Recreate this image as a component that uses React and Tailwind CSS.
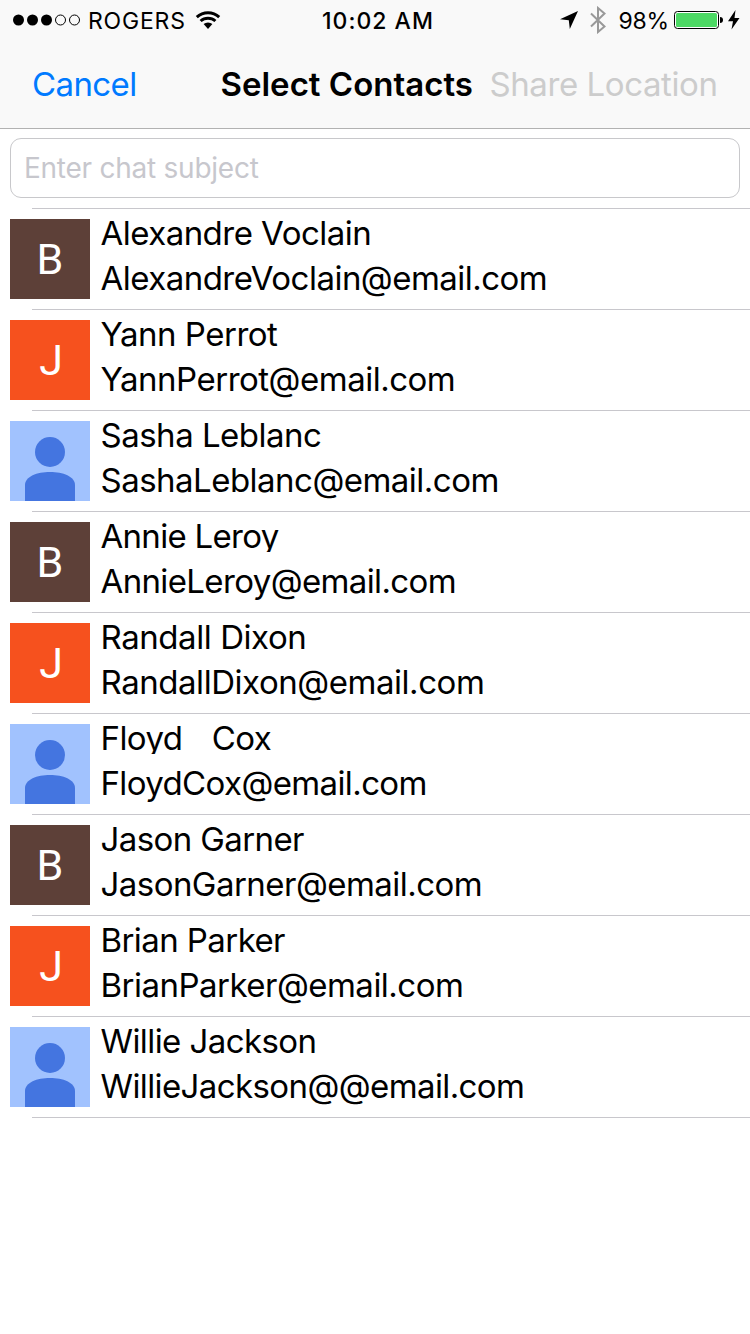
const contacts = [
  { name: "Alexandre Voclain", email: "AlexandreVoclain@email.com", avatar: "B", nameFit: "tracking-[-0.53px]", emailFit: "tracking-[-0.52px]" },
  { name: "Yann Perrot", email: "YannPerrot@email.com", avatar: "J", nameFit: "tracking-[-0.5px]", emailFit: "tracking-[-0.5px]" },
  { name: "Sasha Leblanc", email: "SashaLeblanc@email.com", avatar: "person", nameFit: "tracking-[-0.5px]", emailFit: "tracking-[-0.52px]" },
  { name: "Annie Leroy", email: "AnnieLeroy@email.com", avatar: "B", nameFit: "tracking-[-0.7px]", emailFit: "tracking-[-0.63px]" },
  { name: "Randall Dixon", email: "RandallDixon@email.com", avatar: "J", nameFit: "tracking-[-0.43px]", emailFit: "tracking-[-0.45px]" },
  { name: "Floyd   Cox", email: "FloydCox@email.com", avatar: "person", nameFit: "tracking-[-0.55px] [word-spacing:1px]", emailFit: "tracking-[-0.62px]" },
  { name: "Jason Garner", email: "JasonGarner@email.com", avatar: "B", nameFit: "tracking-[-0.6px]", emailFit: "tracking-[-0.54px]" },
  { name: "Brian Parker", email: "BrianParker@email.com", avatar: "J", nameFit: "tracking-[-0.58px]", emailFit: "tracking-[-0.52px]" },
  { name: "Willie Jackson", email: "WillieJackson@@email.com", avatar: "person", nameFit: "tracking-[-0.58px]", emailFit: "tracking-[-0.6px]" },
];

function Avatar({ kind }) {
  if (kind === "person") {
    return (
      <svg className="size-20 shrink-0" viewBox="0 0 80 80">
        <rect width="80" height="80" fill="#a1c2fe" />
        <circle cx="40" cy="31" r="15" fill="#4475e0" />
        <path d="M15 80V64C15 55.500 27 51 40 51S65 55.500 65 64V80Z" fill="#4475e0" />
      </svg>
    );
  }
  const color = kind === "B" ? "bg-[#5d4038]" : "bg-[#f6511e] pl-0.5";
  return (
    <div className={`flex size-20 shrink-0 items-center justify-center pt-px font-['Roboto',sans-serif] text-[43px] leading-none text-white ${color}`}>
      {kind}
    </div>
  );
}

function StatusBar() {
  return (
    <div className="grid h-10 grid-cols-[1fr_auto_1fr] items-center pl-3 pr-2.5 text-[23px] leading-[38px]">
      <div className="flex items-center">
        <svg className="h-3 w-[70px]" viewBox="0 0 70 12">
          <circle cx="6.500" cy="6" r="5.500" />
          <circle cx="20.500" cy="6" r="5.500" />
          <circle cx="34.500" cy="6" r="5.500" />
          <g fill="none" stroke="#000">
            <circle cx="48.500" cy="6" r="5" />
            <circle cx="62.500" cy="6" r="5" />
          </g>
        </svg>
        <span className="ml-1.5 pt-0.5 tracking-[0.8px]">ROGERS</span>
        <svg className="ml-[9.5px] h-[18px] w-[26px]" viewBox="0 0 26 18">
          <g fill="none" stroke="#000" strokeWidth="3">
            <path d="M1.800 6.200A16.500 16.500 0 0 1 24.200 6.200" />
            <path d="M5.600 10A11 11 0 0 1 20.400 10" />
          </g>
          <path d="M8.600 13.100A6.500 6.500 0 0 1 17.400 13.100L13 18Z" />
        </svg>
      </div>
      <span className="-mr-px pl-[3px] pt-0.5 font-medium tracking-[1px]">10:02 AM</span>
      <div className="flex items-center justify-end">
        <svg className="h-[18px] w-[18px]" viewBox="0 0 18 18">
          <path d="M18 0L9.800 18L8.800 9.200L0 8.200Z" />
        </svg>
        <svg className="ml-3 h-7 w-4" viewBox="0 0 16 28" fill="none" stroke="#999" strokeWidth="2">
          <path d="M1 7.500L14.500 20.500L8 26V2L14.500 7.500L1 20.500" />
        </svg>
        <span className="ml-[13px] pt-0.5 tracking-[-0.2px]">98%</span>
        <svg className="ml-[5px] h-[18px] w-[50px]" viewBox="0 0 50 18">
          <rect x="0.500" y="0.500" width="44" height="17" rx="3" fill="#fff" stroke="#000" />
          <rect x="2" y="2" width="41" height="14" rx="1.500" fill="#4cd964" />
          <path d="M46 6C48 6 49 7 49 9S48 12 46 12Z" />
        </svg>
        <svg className="ml-1 h-5 w-3" viewBox="0 0 12 20">
          <path d="M7.500 0L0 11.200H5L3.500 19.500L11.500 8H6.500Z" />
        </svg>
      </div>
    </div>
  );
}

export default function App() {
  return (
    <main className="h-[1334px] w-[750px] overflow-hidden bg-white font-['Inter',sans-serif] text-black">
      <header className="h-[129px] border-b border-[#b2b2b2] bg-[#f9f9f9]">
        <StatusBar />
        <nav className="flex h-[88px] items-center whitespace-nowrap pl-8 text-[33px] leading-[88px]">
          <button className="w-[188.5px] text-left text-[#007aff] tracking-[-0.6px]">Cancel</button>
          <h1 className="w-[269px] font-semibold">Select Contacts</h1>
          <button className="text-[#cccccc] tracking-[-0.42px]">Share Location</button>
        </nav>
      </header>
      <div className="p-2.5 pt-[9px]">
        <input
          className="block h-[60px] w-full rounded-[11px] border border-[#c8c8cb] bg-white px-[13px] text-[28px] tracking-[-0.25px] placeholder:text-[#c7c7cd]"
          placeholder="Enter chat subject"
        />
      </div>
      <div className="ml-8 h-px bg-[#c8c7cc]" />
      <ul>
        {contacts.map((c) => (
          <li key={c.email}>
            <div className="flex h-[100px] pl-2.5">
              <div className="pt-2.5">
                <Avatar kind={c.avatar} />
              </div>
              <div className="ml-[10.5px] whitespace-pre text-[33px]">
                <div className={`h-10 overflow-hidden leading-[48px] ${c.nameFit}`}>{c.name}</div>
                <div className={`mt-[7px] leading-[45px] ${c.emailFit}`}>{c.email}</div>
              </div>
            </div>
            <div className="ml-8 h-px bg-[#c8c7cc]" />
          </li>
        ))}
      </ul>
    </main>
  );
}
